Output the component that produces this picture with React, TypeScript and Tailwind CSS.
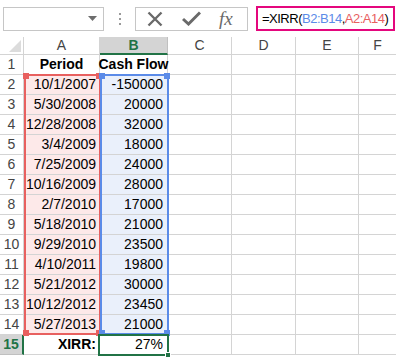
import React from 'react';

const rows: [string, string][] = [
  ['10/1/2007', '-150000'],
  ['5/30/2008', '20000'],
  ['12/28/2008', '32000'],
  ['3/4/2009', '18000'],
  ['7/25/2009', '24000'],
  ['10/16/2009', '28000'],
  ['2/7/2010', '17000'],
  ['5/18/2010', '21000'],
  ['9/29/2010', '23500'],
  ['4/10/2011', '19800'],
  ['5/21/2012', '30000'],
  ['10/12/2012', '23450'],
  ['5/27/2013', '21000'],
];

const cols = ['A', 'B', 'C', 'D', 'E', 'F'];
const line = 'border-r border-b border-[#d4d4d4]';

const Corner = ({ className }: { className: string }) => (
  <span className={`absolute w-[6px] h-[6px] ${className}`} />
);

export default function App() {
  return (
    <div className="w-[396px] h-[358px] overflow-hidden bg-white text-[14px] text-black" style={{ fontFamily: '"Liberation Sans", Arial, sans-serif' }}>
      {/* formula bar */}
      <div className="flex items-center h-[36px] pt-[1px]">
        <div className="ml-[3px] w-[101px] h-[24px] border border-[#c6c6c6] flex items-center justify-end pr-[6px]">
          <svg width="9" height="5" viewBox="0 0 9 5"><path d="M0 0h9L4.5 5z" fill="#6d6d6d" /></svg>
        </div>
        <div className="w-[31px] flex flex-col items-center gap-[3px]">
          <span className="w-[2px] h-[2px] bg-[#9a9a9a]" />
          <span className="w-[2px] h-[2px] bg-[#9a9a9a]" />
          <span className="w-[2px] h-[2px] bg-[#9a9a9a]" />
        </div>
        <div className="w-[113px] h-[24px] border border-[#c6c6c6] flex items-center">
          <svg className="ml-[11px]" width="16" height="16" viewBox="0 0 16 16"><path d="M1.5 1.5l13 13M14.5 1.5l-13 13" stroke="#6a6a6a" strokeWidth="2.4" /></svg>
          <svg className="ml-[19px]" width="19" height="15" viewBox="0 0 19 15"><path d="M1 8l5.5 5L18 1.5" stroke="#6a6a6a" strokeWidth="3" fill="none" /></svg>
          <span className="ml-[18px] text-[19px] italic text-[#6a6a6a] leading-none" style={{ fontFamily: '"Liberation Serif", serif' }}>fx</span>
        </div>
        <div className="ml-[8px] w-[139px] h-[25px] border-2 border-[#e4077d] flex items-center pl-[4px] text-[13px] tracking-[-0.5px] whitespace-nowrap overflow-hidden">
          <span>=XIRR(</span>
          <span className="text-[#5b8be8]">B2:B14</span>
          <span>,</span>
          <span className="text-[#e8605f]">A2:A14</span>
          <span>)</span>
        </div>
      </div>

      {/* sheet */}
      <div className="relative mt-[1px]">
        <div className="grid grid-cols-[24px_76px_68px_64px_64px_63px_37px]">
          <div className={`${line} h-[18px] bg-white relative overflow-hidden`}>
            <svg className="absolute right-[2px] bottom-[2px]" width="12" height="12" viewBox="0 0 12 12"><path d="M12 0v12H0z" fill="#dcdcdc" /></svg>
          </div>
          {cols.map((c) => (
            <div
              key={c}
              className={
                c === 'B'
                  ? 'h-[18px] bg-[#d4d4d4] border-r border-[#c0c0c0] border-b-2 border-b-[#217346] flex items-center justify-center font-bold text-[#217346]'
                  : c === 'F'
                    ? 'h-[18px] border-b border-[#d4d4d4] flex items-center justify-center text-[#444]'
                    : `${line} h-[18px] flex items-center justify-center text-[#444]`
              }
            >
              {c}
            </div>
          ))}

          <div className={`${line} h-[20px] flex items-center justify-center text-[#444]`}>1</div>
          <div className={`${line} h-[20px] flex items-center justify-center font-bold`}>Period</div>
          <div className={`${line} h-[20px] flex items-center justify-center font-bold whitespace-nowrap`}>Cash Flow</div>
          <div className={`${line} h-[20px]`} />
          <div className={`${line} h-[20px]`} />
          <div className={`${line} h-[20px]`} />
          <div className="h-[20px] border-b border-[#d4d4d4]" />

          {rows.map(([d, v], i) => (
            <React.Fragment key={i}>
              <div className={`${line} h-[20px] flex items-center justify-center text-[#444]`}>{i + 2}</div>
              <div className={`${line} h-[20px] bg-[#fde9e9] flex items-center justify-end pr-[3px]`}>{d}</div>
              <div className={`${line} h-[20px] bg-[#eaf0fb] flex items-center justify-end pr-[4px]`}>{v}</div>
              <div className={`${line} h-[20px]`} />
              <div className={`${line} h-[20px]`} />
              <div className={`${line} h-[20px]`} />
              <div className="h-[20px] border-b border-[#d4d4d4]" />
            </React.Fragment>
          ))}

          <div className="h-[20px] bg-[#d4d4d4] border-r-2 border-r-[#217346] border-b border-[#c0c0c0] flex items-center justify-center font-bold text-[#217346]">15</div>
          <div className={`${line} h-[20px] flex items-center justify-end pr-[3px] font-bold`}>XIRR:</div>
          <div className={`${line} h-[20px] flex items-center justify-end pr-[4px]`}>27%</div>
          <div className={`${line} h-[20px]`} />
          <div className={`${line} h-[20px]`} />
          <div className={`${line} h-[20px]`} />
          <div className="h-[20px] border-b border-[#d4d4d4]" />
        </div>

        {/* range highlights */}
        <div className="absolute left-[24px] top-[37px] w-[77px] h-[261px] border-2 border-[#e8605f] pointer-events-none">
          <Corner className="-left-[3px] -top-[3px] bg-[#e8605f]" />
          <Corner className="-right-[3px] -top-[3px] bg-[#e8605f]" />
          <Corner className="-left-[3px] -bottom-[3px] bg-[#e8605f]" />
          <Corner className="-right-[3px] -bottom-[3px] bg-[#e8605f]" />
        </div>
        <div className="absolute left-[100px] top-[37px] w-[69px] h-[261px] border-2 border-[#5b8be8] pointer-events-none">
          <Corner className="-left-[3px] -top-[3px] bg-[#5b8be8]" />
          <Corner className="-right-[3px] -top-[3px] bg-[#5b8be8]" />
          <Corner className="-left-[3px] -bottom-[3px] bg-[#5b8be8]" />
          <Corner className="-right-[3px] -bottom-[3px] bg-[#5b8be8]" />
        </div>
        {/* active cell */}
        <div className="absolute left-[98px] top-[297px] w-[71px] h-[22px] border-2 border-[#217346] pointer-events-none">
          <Corner className="-right-[4px] -bottom-[4px] bg-[#217346] border border-white" />
        </div>
      </div>
    </div>
  );
}
